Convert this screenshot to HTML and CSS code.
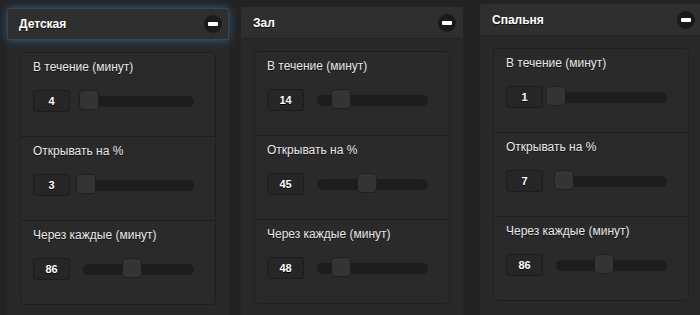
FILE: index.html
```html
<!DOCTYPE html>
<html lang="ru">
<head>
<meta charset="utf-8">
<link rel="stylesheet" href="styles.css">
</head>
<body>
<div class="board">
  <div class="panel panel-one">
    <div class="panel-head focused">
      <span class="panel-title">Детская</span>
      <span class="collapse"><span class="bar"></span></span>
    </div>
    <div class="card">
      <div class="section">
        <div class="label">В течение (минут)</div>
        <div class="control"><div class="value">4</div><div class="track"><div class="thumb" style="left:5%"></div></div></div>
      </div>
      <div class="section">
        <div class="label">Открывать на %</div>
        <div class="control"><div class="value">3</div><div class="track"><div class="thumb" style="left:3%"></div></div></div>
      </div>
      <div class="section">
        <div class="label">Через каждые (минут)</div>
        <div class="control"><div class="value">86</div><div class="track"><div class="thumb" style="left:44%"></div></div></div>
      </div>
    </div>
  </div>

  <div class="panel panel-two">
    <div class="panel-head">
      <span class="panel-title">Зал</span>
      <span class="collapse"><span class="bar"></span></span>
    </div>
    <div class="card">
      <div class="section">
        <div class="label">В течение (минут)</div>
        <div class="control"><div class="value">14</div><div class="track"><div class="thumb" style="left:22%"></div></div></div>
      </div>
      <div class="section">
        <div class="label">Открывать на %</div>
        <div class="control"><div class="value">45</div><div class="track"><div class="thumb" style="left:45%"></div></div></div>
      </div>
      <div class="section">
        <div class="label">Через каждые (минут)</div>
        <div class="control"><div class="value">48</div><div class="track"><div class="thumb" style="left:22%"></div></div></div>
      </div>
    </div>
  </div>

  <div class="panel panel-three">
    <div class="panel-head">
      <span class="panel-title">Спальня</span>
      <span class="collapse"><span class="bar"></span></span>
    </div>
    <div class="card">
      <div class="section">
        <div class="label">В течение (минут)</div>
        <div class="control"><div class="value">1</div><div class="track"><div class="thumb" style="left:0%"></div></div></div>
      </div>
      <div class="section">
        <div class="label">Открывать на %</div>
        <div class="control"><div class="value">7</div><div class="track"><div class="thumb" style="left:7%"></div></div></div>
      </div>
      <div class="section">
        <div class="label">Через каждые (минут)</div>
        <div class="control"><div class="value">86</div><div class="track"><div class="thumb" style="left:43%"></div></div></div>
      </div>
    </div>
  </div>
</div>
</body>
</html>
```

FILE: styles.css
```css
html, body {
  margin: 0;
  padding: 0;
}
body {
  width: 700px;
  height: 315px;
  overflow: hidden;
  background: #232323;
  font-family: "Liberation Sans", Arial, sans-serif;
  color: #e8e8e8;
}
.board {
  display: flex;
  align-items: flex-start;
  padding-left: 7px;
}
.panel {
  flex: 0 0 222px;
  width: 222px;
  height: 340px;
  background: #282828;
  box-sizing: border-box;
}
.panel-one { margin-top: 8px; }
.panel-two { margin-top: 7px; margin-left: 12px; }
.panel-three { margin-top: 4px; margin-left: 17px; }

.panel-head {
  height: 32px;
  box-sizing: border-box;
  display: flex;
  align-items: center;
  justify-content: space-between;
  padding: 0 6px 0 11px;
  background: #2f2f2f;
  border: 1px solid #2f2f2f;
  border-bottom-color: #222;
  border-radius: 3px 3px 0 0;
}
.panel-head.focused {
  border-color: #3c4650;
  box-shadow: 0 0 10px rgba(60, 140, 205, 0.55);
}
.panel-title {
  font-size: 12px;
  font-weight: bold;
  color: #fff;
  text-shadow: 0 1px 0 #111;
}
.collapse {
  width: 18px;
  height: 18px;
  border-radius: 50%;
  background: #1a1a1a;
  display: flex;
  align-items: center;
  justify-content: center;
}
.bar {
  width: 10px;
  height: 4px;
  background: #fff;
  border-radius: 1px;
}

.card {
  margin: 12px 13px 0;
  background: #2a2a2a;
  border: 1px solid #1f1f1f;
  border-radius: 5px;
}
.section {
  height: 84px;
  box-sizing: border-box;
  padding: 7px 12px 0;
  border-bottom: 1px solid #1f1f1f;
}
.section:last-child {
  border-bottom: none;
  height: 83px;
}
.label {
  font-size: 12px;
  line-height: 15px;
  color: #e8e8e8;
  text-shadow: 0 1px 0 #111;
}
.control {
  margin-top: 15px;
  display: flex;
  align-items: center;
}
.value {
  width: 37px;
  height: 22px;
  box-sizing: border-box;
  background: #262626;
  border: 1px solid #1c1c1c;
  border-radius: 3px;
  font-size: 11px;
  font-weight: bold;
  color: #fff;
  text-shadow: 0 1px 0 #000;
  display: flex;
  align-items: center;
  justify-content: center;
}
.track {
  position: relative;
  margin-left: 13px;
  width: 111px;
  height: 11px;
  background: #1d1d1d;
  border-radius: 6px;
}
.thumb {
  position: absolute;
  top: -6px;
  width: 20px;
  height: 20px;
  margin-left: -10px;
  box-sizing: border-box;
  background: #343434;
  border: 1px solid #1f1f1f;
  border-radius: 4px;
}
```
